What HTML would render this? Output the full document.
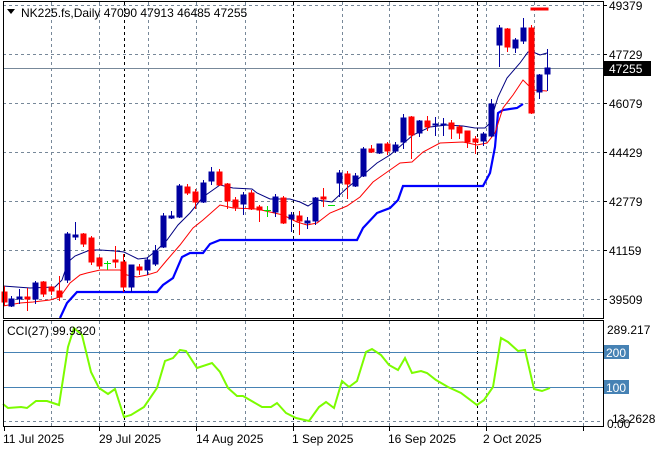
<!DOCTYPE html>
<html><head><meta charset="utf-8"><style>
html,body{margin:0;padding:0;background:#fff;}
svg{display:block;font-family:"Liberation Sans",sans-serif;font-size:12px;}
</style></head><body>
<svg width="660" height="450" viewBox="0 0 660 450" xmlns="http://www.w3.org/2000/svg">
<rect width="660" height="450" fill="#fff"/>
<!-- grid main -->
<g stroke="#778899" stroke-width="1" stroke-dasharray="3,3" fill="none">
<path d="M3 5.5H603M3 54.5H603M3 103.5H603M3 152.5H603M3 201.5H603M3 250.5H603M3 299.5H603"/>
<path d="M51.5 2V318M99.5 2V318M148.5 2V318M196.5 2V318M245.5 2V318M342.5 2V318M389.5 2V318M438.5 2V318M486.5 2V318M534.5 2V318M583.5 2V318"/>
<path d="M51.5 321V426M99.5 321V426M148.5 321V426M196.5 321V426M245.5 321V426M342.5 321V426M389.5 321V426M438.5 321V426M486.5 321V426M534.5 321V426M583.5 321V426"/>
<path d="M3 421.5H603"/>
</g>
<g stroke="#000" stroke-width="1" stroke-dasharray="3,3" fill="none">
<path d="M124.5 2V318M293.5 2V318M477.5 2V318M124.5 321V426M293.5 321V426M477.5 321V426"/>
</g>
<line x1="3" y1="68.5" x2="603" y2="68.5" stroke="#778899"/>
<line x1="3" y1="352.5" x2="603" y2="352.5" stroke="#4682B4"/>
<line x1="3" y1="387.5" x2="603" y2="387.5" stroke="#4682B4"/>
<!-- MAs -->
<polyline fill="none" stroke="#0000ff" stroke-width="2.2" points="60,318 67,303 77,292 157,292 163,285 173,278 182,257 190,253 203,253 210,244 220,240 357,240 363,228 377,213 390,208 398,200 403,186 483,186 490,173 495,147 498,113 503,110 517,108 523,104"/>
<polyline fill="none" stroke="#ff0000" stroke-width="1" points="3,306 20,303 33,302 50,300 60,297 70,283 80,275 87,273 100,270 120,270 127,275 137,277 147,275 157,272 167,260 180,245 193,228 203,220 220,205 233,208 257,209 283,215 297,222 307,225 317,223 330,213 347,206 360,197 373,182 380,177 400,163 412,162 423,152 440,143 463,142 477,145 487,143 495,133 503,108 513,95 523,80 533,90 547,91"/>
<polyline fill="none" stroke="#000080" stroke-width="1" points="3,286 30,288 55,287 62,280 68,262 75,256 90,250 100,250 115,251 124,252 138,259 147,258 157,250 167,240 178,225 190,213 203,197 220,185 233,188 252,189 257,193 270,199 290,199 300,202 308,206 317,200 332,202 347,188 363,175 377,163 390,155 397,149 413,135 430,127 447,125 463,126 475,128 485,128 490,123 498,97 507,78 520,63 528,52 533,52 540,55 547,53"/>
<!-- candles -->
<g stroke-width="1">
<g stroke="#ff0000" fill="#ff0000">
<line x1="4.5" y1="286" x2="4.5" y2="306"/><rect x="2" y="292" width="5" height="10"/>
<line x1="27.5" y1="288" x2="27.5" y2="311"/><rect x="25" y="297" width="5" height="2"/>
<line x1="43.5" y1="281" x2="43.5" y2="297"/><rect x="41" y="282" width="5" height="12"/>
<line x1="51.5" y1="286" x2="51.5" y2="295"/><rect x="49" y="287" width="5" height="4"/>
<line x1="59.5" y1="276" x2="59.5" y2="301"/><rect x="57" y="291" width="5" height="6"/>
<line x1="83.5" y1="233" x2="83.5" y2="247"/><rect x="81" y="234" width="5" height="10"/>
<line x1="91.5" y1="236" x2="91.5" y2="265"/><rect x="89" y="238" width="5" height="24"/>
<line x1="99.5" y1="257" x2="99.5" y2="269"/><rect x="97" y="258" width="5" height="8"/>
<line x1="115.5" y1="246" x2="115.5" y2="268"/><rect x="113" y="260" width="5" height="2"/>
<line x1="123.5" y1="254" x2="123.5" y2="292"/><rect x="121" y="262" width="5" height="25"/>
<line x1="139.5" y1="264" x2="139.5" y2="275"/><rect x="137" y="267" width="5" height="3"/>
<line x1="187.5" y1="184" x2="187.5" y2="195"/><rect x="185" y="187" width="5" height="6"/>
<line x1="195.5" y1="189" x2="195.5" y2="209"/><rect x="193" y="192" width="5" height="10"/>
<line x1="219.5" y1="169" x2="219.5" y2="186"/><rect x="217" y="172" width="5" height="13"/>
<line x1="227.5" y1="183" x2="227.5" y2="209"/><rect x="225" y="184" width="5" height="17"/>
<line x1="235.5" y1="197" x2="235.5" y2="211"/><rect x="233" y="200" width="5" height="7"/>
<line x1="251.5" y1="190" x2="251.5" y2="210"/><rect x="249" y="193" width="5" height="16"/>
<line x1="259.5" y1="205" x2="259.5" y2="222"/><rect x="257" y="207" width="5" height="3"/>
<line x1="283.5" y1="196" x2="283.5" y2="224"/><rect x="281" y="198" width="5" height="25"/>
<line x1="299.5" y1="211" x2="299.5" y2="235"/><rect x="297" y="216" width="5" height="5"/>
<line x1="323.5" y1="188" x2="323.5" y2="207"/><rect x="321" y="197" width="5" height="2"/>
<line x1="347.5" y1="171" x2="347.5" y2="199"/><rect x="345" y="174" width="5" height="10"/>
<line x1="371.5" y1="145" x2="371.5" y2="153"/><rect x="369" y="149" width="5" height="3"/>
<line x1="387.5" y1="142" x2="387.5" y2="155"/><rect x="385" y="144" width="5" height="7"/>
<line x1="411.5" y1="116" x2="411.5" y2="159"/><rect x="409" y="117" width="5" height="18"/>
<line x1="427.5" y1="116" x2="427.5" y2="131"/><rect x="425" y="121" width="5" height="6"/>
<line x1="451.5" y1="120" x2="451.5" y2="139"/><rect x="449" y="123" width="5" height="6"/>
<line x1="459.5" y1="125" x2="459.5" y2="139"/><rect x="457" y="127" width="5" height="6"/>
<line x1="467.5" y1="131" x2="467.5" y2="148"/><rect x="465" y="131" width="5" height="11"/>
<line x1="475.5" y1="136" x2="475.5" y2="154"/><rect x="473" y="139" width="5" height="3"/>
<line x1="507.5" y1="28" x2="507.5" y2="52"/><rect x="505" y="29" width="5" height="18"/>
<line x1="531.5" y1="25" x2="531.5" y2="114"/><rect x="529" y="28" width="5" height="85"/>
<rect x="531" y="8" width="17" height="2"/>
</g>
<g stroke="#0000a0" fill="#0000a0">
<line x1="11.5" y1="296" x2="11.5" y2="307"/><rect x="9" y="299" width="5" height="7"/>
<line x1="19.5" y1="289" x2="19.5" y2="304"/><rect x="17" y="297" width="5" height="2"/>
<line x1="35.5" y1="281" x2="35.5" y2="304"/><rect x="33" y="283" width="5" height="16"/>
<line x1="67.5" y1="232" x2="67.5" y2="283"/><rect x="65" y="234" width="5" height="46"/>
<line x1="75.5" y1="222" x2="75.5" y2="240"/><rect x="73" y="235" width="5" height="2"/>
<line x1="131.5" y1="265" x2="131.5" y2="292"/><rect x="129" y="265" width="5" height="22"/>
<line x1="147.5" y1="257" x2="147.5" y2="275"/><rect x="145" y="260" width="5" height="10"/>
<line x1="155.5" y1="245" x2="155.5" y2="266"/><rect x="153" y="251" width="5" height="13"/>
<line x1="163.5" y1="213" x2="163.5" y2="248"/><rect x="161" y="216" width="5" height="31"/>
<line x1="171.5" y1="211" x2="171.5" y2="219"/><rect x="169" y="216" width="5" height="2"/>
<line x1="179.5" y1="184" x2="179.5" y2="218"/><rect x="177" y="186" width="5" height="31"/>
<line x1="203.5" y1="180" x2="203.5" y2="203"/><rect x="201" y="183" width="5" height="19"/>
<line x1="211.5" y1="167" x2="211.5" y2="185"/><rect x="209" y="172" width="5" height="9"/>
<line x1="243.5" y1="192" x2="243.5" y2="215"/><rect x="241" y="195" width="5" height="9"/>
<line x1="275.5" y1="194" x2="275.5" y2="217"/><rect x="273" y="197" width="5" height="15"/>
<line x1="291.5" y1="212" x2="291.5" y2="232"/><rect x="289" y="215" width="5" height="4"/>
<line x1="307.5" y1="217" x2="307.5" y2="229"/><rect x="305" y="221" width="5" height="2"/>
<line x1="315.5" y1="197" x2="315.5" y2="225"/><rect x="313" y="198" width="5" height="23"/>
<line x1="339.5" y1="170" x2="339.5" y2="197"/><rect x="337" y="173" width="5" height="10"/>
<line x1="355.5" y1="173" x2="355.5" y2="187"/><rect x="353" y="176" width="5" height="10"/>
<line x1="363.5" y1="147" x2="363.5" y2="177"/><rect x="361" y="149" width="5" height="27"/>
<line x1="379.5" y1="144" x2="379.5" y2="154"/><rect x="377" y="144" width="5" height="9"/>
<line x1="395.5" y1="142" x2="395.5" y2="153"/><rect x="393" y="145" width="5" height="6"/>
<line x1="403.5" y1="114" x2="403.5" y2="149"/><rect x="401" y="118" width="5" height="24"/>
<line x1="419.5" y1="120" x2="419.5" y2="137"/><rect x="417" y="121" width="5" height="12"/>
<line x1="435.5" y1="117" x2="435.5" y2="136"/><rect x="433" y="124" width="5" height="1"/>
<line x1="443.5" y1="118" x2="443.5" y2="136"/><rect x="441" y="124" width="5" height="1"/>
<line x1="483.5" y1="132" x2="483.5" y2="146"/><rect x="481" y="134" width="5" height="7"/>
<line x1="491.5" y1="99" x2="491.5" y2="137"/><rect x="489" y="104" width="5" height="32"/>
<line x1="499.5" y1="25" x2="499.5" y2="67"/><rect x="497" y="28" width="5" height="17"/>
<line x1="515.5" y1="38" x2="515.5" y2="53"/><rect x="513" y="40" width="5" height="8"/>
<line x1="523.5" y1="18" x2="523.5" y2="44"/><rect x="521" y="28" width="5" height="13"/>
<line x1="539.5" y1="74" x2="539.5" y2="99"/><rect x="537" y="75" width="5" height="17"/>
<line x1="547.5" y1="49" x2="547.5" y2="91"/><rect x="545" y="68" width="5" height="6"/>
</g>
<g stroke="#00e000">
<line x1="107.5" y1="261" x2="107.5" y2="270"/><line x1="104" y1="263.5" x2="111" y2="263.5"/>
<line x1="267.5" y1="206" x2="267.5" y2="217"/><line x1="264" y1="210.5" x2="271" y2="210.5"/>
<line x1="328" y1="205.5" x2="335" y2="205.5"/>
</g>
</g>
<!-- CCI -->
<polyline fill="none" stroke="#7CFC00" stroke-width="2" points="3,404 8,408 21,407 27,408 36,401 47,401 59,405 68,347 74,328 82,335 91,372 99,388 108,394 115,389 124,417 131,415 144,407 157,388 165,361 173,358 180,350 186,351 197,368 212,363 220,372 228,388 237,396 243,396 262,407 271,407 277,403 286,413 296,418 309,421 319,407 326,402 334,408 342,381 349,387 357,381 366,352 372,349 381,355 389,365 398,370 405,358 412,373 421,371 427,373 436,380 448,387 461,393 477,405 484,400 493,387 501,338 508,342 518,351 525,350 534,389 542,391 550,388"/>
<!-- frames -->
<g fill="none" stroke="#000" stroke-width="1">
<rect x="3.5" y="1.5" width="600" height="317"/>
<rect x="3.5" y="320.5" width="600" height="106"/>
</g>
<g stroke="#000"><path d="M4.5 427V431M99.5 427V431M196.5 427V431M293.5 427V431M389.5 427V431M486.5 427V431M583.5 427V431"/></g>
<g stroke="#000"><path d="M603 5.5H607M603 54.5H607M603 103.5H607M603 152.5H607M603 201.5H607M603 250.5H607M603 299.5H607"/></g>
<!-- header -->
<path d="M7 9H15L11 14Z" fill="#000"/>
<text x="21" y="17" fill="#000">NK225.fs,Daily  47090 47913 46485 47255</text>
<!-- axis labels -->
<g fill="#000">
<text x="609" y="10">49379</text>
<text x="609" y="59">47729</text>
<text x="609" y="108">46079</text>
<text x="609" y="157">44429</text>
<text x="609" y="206">42779</text>
<text x="609" y="255">41159</text>
<text x="609" y="304">39509</text>
</g>
<rect x="604" y="61" width="47" height="15" fill="#000"/>
<text x="609" y="73" fill="#fff">47255</text>
<text x="7" y="335" fill="#000">CCI(27) 99.9320</text>
<text x="607" y="334" fill="#000">289.217</text>
<rect x="604" y="345" width="25" height="14" fill="#4682B4"/>
<text x="606" y="357" fill="#fff">200</text>
<rect x="604" y="380" width="25" height="14" fill="#4682B4"/>
<text x="606" y="392" fill="#fff">100</text>
<text x="612" y="423" fill="#000">13.2628</text>
<text x="607" y="428" fill="#000">0.00</text>
<g fill="#000">
<text x="3" y="443">11 Jul 2025</text>
<text x="99" y="443">29 Jul 2025</text>
<text x="196" y="443">14 Aug 2025</text>
<text x="292" y="443">1 Sep 2025</text>
<text x="388" y="443">16 Sep 2025</text>
<text x="483" y="443">2 Oct 2025</text>
</g>
</svg>
</body></html>
